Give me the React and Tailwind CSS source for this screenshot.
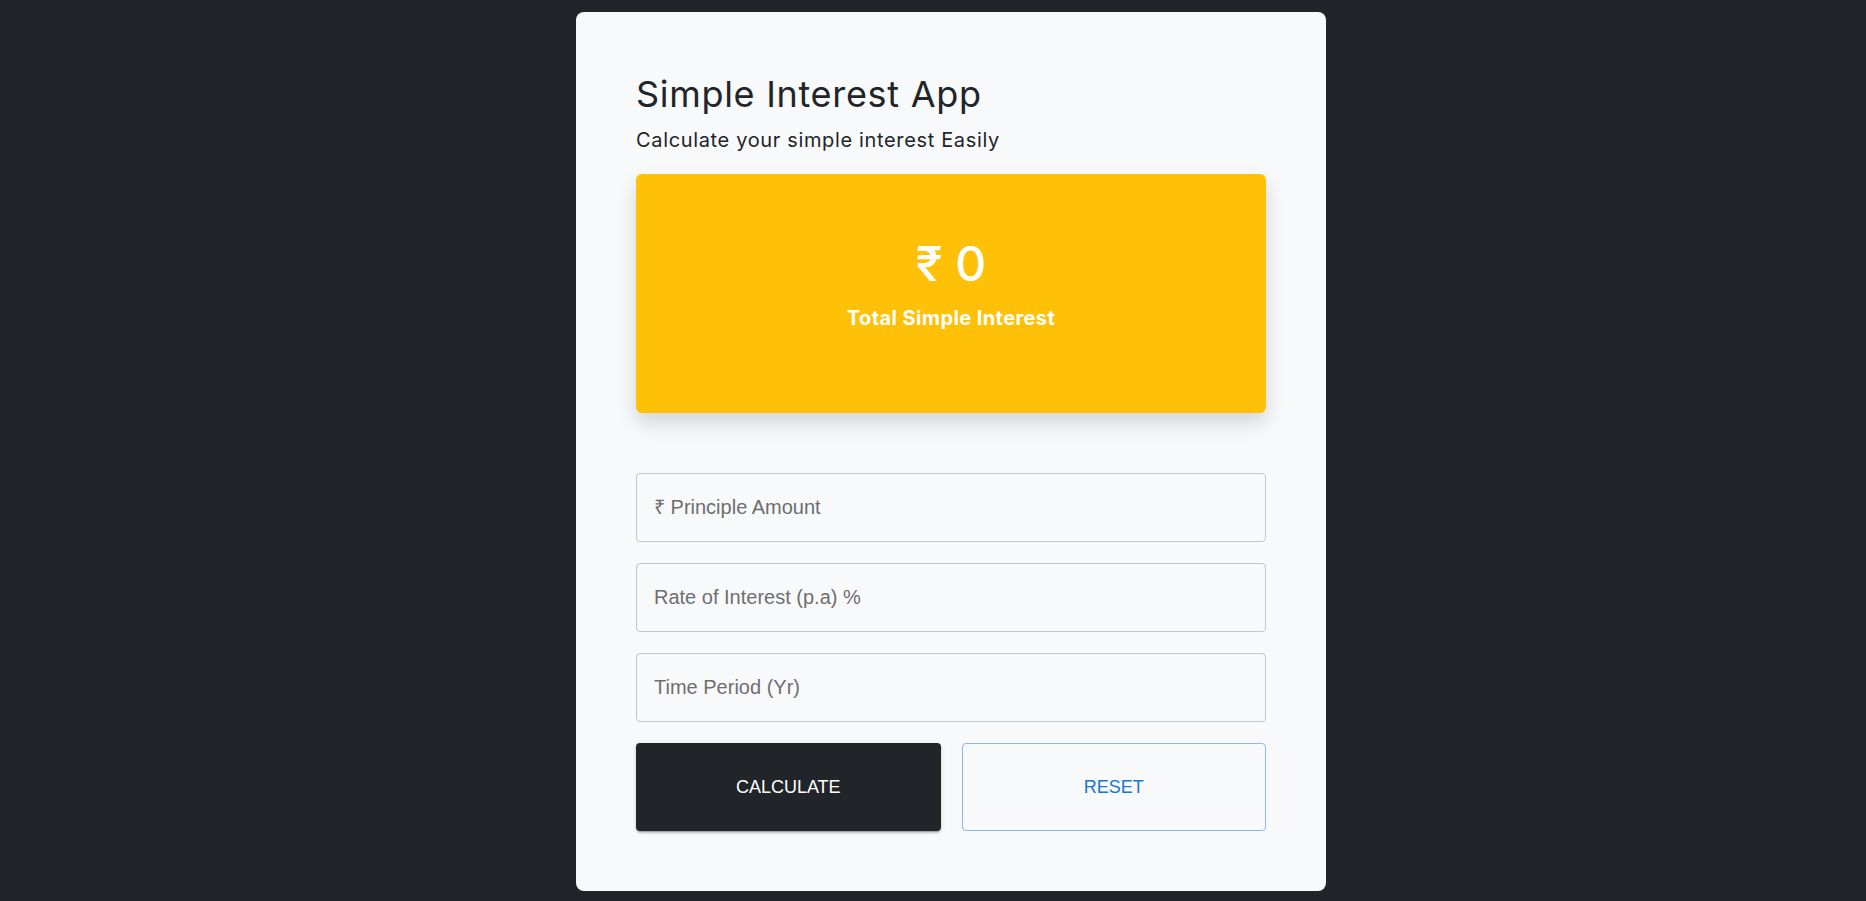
import { useState } from 'react'

export default function App() {
  const [principle, setPrinciple] = useState('')
  const [rate, setRate] = useState('')
  const [years, setYears] = useState('')
  const [interest, setInterest] = useState(0)

  const handleCalculate = () => {
    const p = parseFloat(principle) || 0
    const r = parseFloat(rate) || 0
    const t = parseFloat(years) || 0
    setInterest((p * r * t) / 100)
  }

  const handleReset = () => {
    setPrinciple('')
    setRate('')
    setYears('')
    setInterest(0)
  }

  const inputCls =
    "h-[69px] w-full rounded-[4px] border border-[#c4c4c4] bg-transparent px-[17px] font-['Liberation_Sans',Arial,sans-serif] text-[20px] text-[#212529] placeholder:text-[#6e6e6e] outline-none focus:border-[#1976d2]"

  return (
    <div className="min-h-screen bg-[#212529] pt-[12px] pl-[36px] flex items-start justify-center font-['Inter',sans-serif]">
      <div className="w-[750px] rounded-lg bg-[#f8f9fa] px-[60px] pt-[60px] pb-[60px]">
        {/* Header */}
        <h1 className="text-[36px] leading-[44px] font-normal text-[#212529] tracking-[0.7px]">Simple Interest App</h1>
        <p className="mt-[10px] text-[20px] leading-[28px] text-[#212529] tracking-[0.65px]">Calculate your simple interest Easily</p>

        {/* Result */}
        <div className="mt-[20px] h-[239px] w-[630px] rounded-[6px] bg-[#ffc107] pt-[61px] text-center text-white shadow-[0_10px_20px_rgba(0,0,0,0.15)]">
          <div className="text-[48px] leading-[58px] font-medium">₹ {interest}</div>
          <div className="mt-[11px] text-[20px] leading-[28px] font-bold tracking-[0.4px]">Total Simple Interest</div>
        </div>

        {/* Inputs */}
        <div className="mt-[60px] flex w-[630px] flex-col gap-[21px]">
          <input
            type="number"
            value={principle}
            onChange={(e) => setPrinciple(e.target.value)}
            placeholder="₹ Principle Amount"
            className={inputCls}
          />
          <input
            type="number"
            value={rate}
            onChange={(e) => setRate(e.target.value)}
            placeholder="Rate of Interest (p.a) %"
            className={inputCls}
          />
          <input
            type="number"
            value={years}
            onChange={(e) => setYears(e.target.value)}
            placeholder="Time Period (Yr)"
            className={inputCls}
          />

          <div className="grid grid-cols-2 gap-[21px]">
            <button
              onClick={handleCalculate}
              className="h-[88px] rounded-[4px] bg-[#212529] font-['Liberation_Sans',Arial,sans-serif] text-[18px] text-white shadow-[0_3px_1px_-2px_rgba(0,0,0,0.2),0_2px_2px_0_rgba(0,0,0,0.14),0_1px_5px_0_rgba(0,0,0,0.12)]"
            >
              CALCULATE
            </button>
            <button
              onClick={handleReset}
              className="h-[88px] rounded-[4px] border border-[#8ab9ea] bg-transparent font-['Liberation_Sans',Arial,sans-serif] text-[18px] text-[#1976d2]"
            >
              RESET
            </button>
          </div>
        </div>
      </div>
    </div>
  )
}
